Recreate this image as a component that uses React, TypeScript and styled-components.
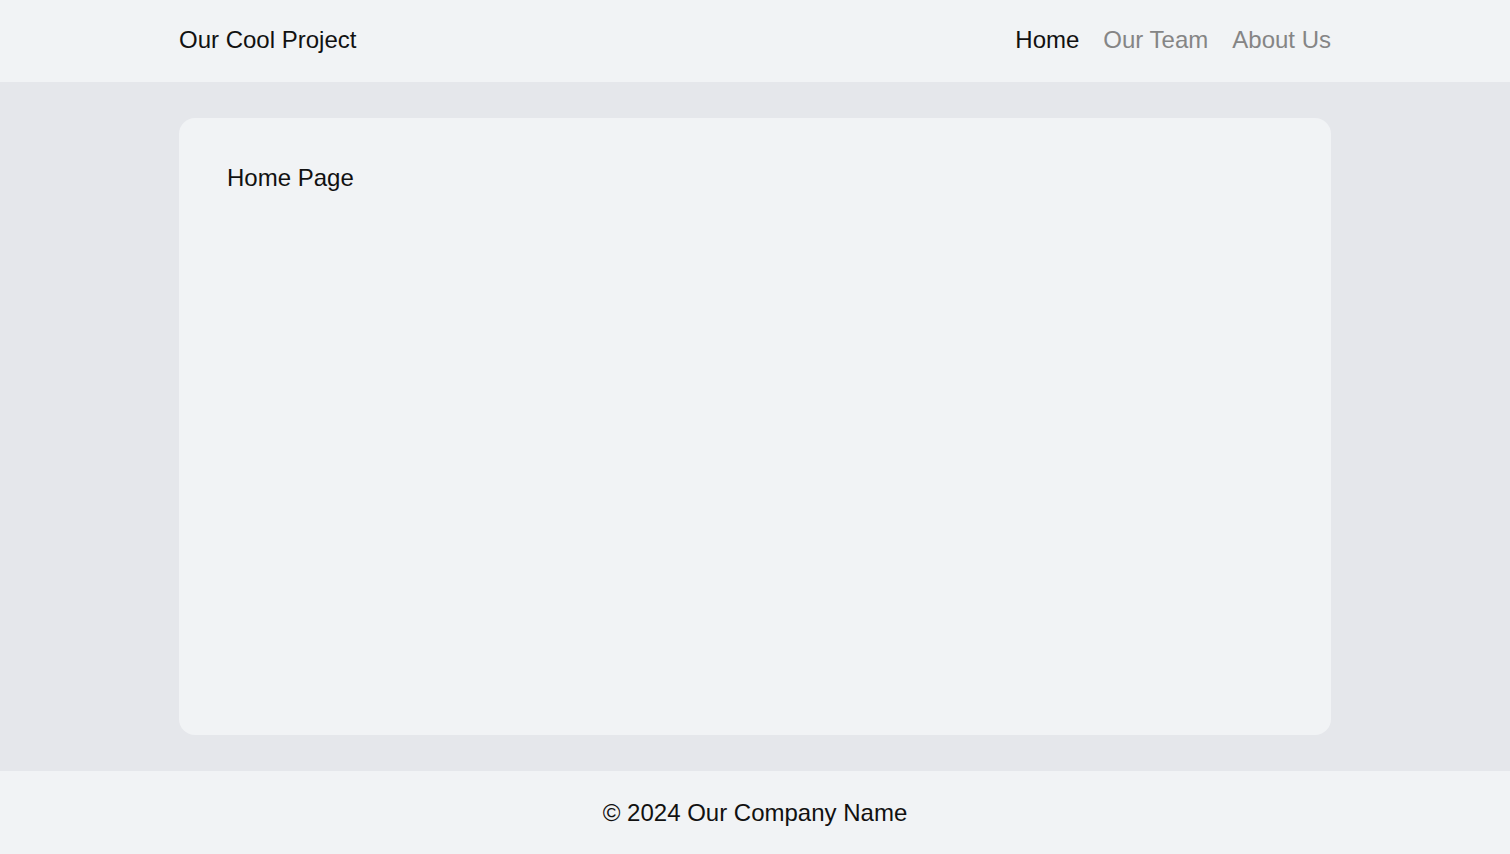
import React from "react";
import styled, { createGlobalStyle } from "styled-components";

const GlobalStyle = createGlobalStyle`
  html, body {
    margin: 0;
    padding: 0;
    height: 100%;
  }
  body {
    font-family: "Liberation Sans", Arial, sans-serif;
    color: #111111;
    background-color: #e5e7eb;
  }
  #root {
    min-height: 100vh;
    display: flex;
    flex-direction: column;
  }
`;

const App = () => {
  return (
    <>
      <GlobalStyle />
      <Header>
        <Inner>
          <Brand>Our Cool Project</Brand>
          <Nav>
            <NavLink href="#" $active>
              Home
            </NavLink>
            <NavLink href="#">Our Team</NavLink>
            <NavLink href="#">About Us</NavLink>
          </Nav>
        </Inner>
      </Header>
      <Main>
        <Card>
          <PageTitle>Home Page</PageTitle>
        </Card>
      </Main>
      <Footer>© 2024 Our Company Name</Footer>
    </>
  );
};

export default App;

const Header = styled.header`
  height: 82px;
  box-sizing: border-box;
  padding-bottom: 2px;
  background-color: #f1f3f5;
  display: flex;
  align-items: center;
`;

const Inner = styled.div`
  width: 1152px;
  margin: 0 auto;
  display: flex;
  align-items: center;
  justify-content: space-between;
`;

const Brand = styled.div`
  font-size: 24px;
  color: #111111;
`;

const Nav = styled.nav`
  display: flex;
  gap: 24px;
`;

const NavLink = styled.a<{ $active?: boolean }>`
  font-size: 24px;
  text-decoration: none;
  color: ${(p) => (p.$active ? "#111111" : "#858585")};
`;

const Main = styled.main`
  flex: 1;
  display: flex;
  padding: 36px 0;
`;

const Card = styled.section`
  flex: 1;
  width: 1152px;
  max-width: 1152px;
  margin: 0 auto;
  box-sizing: border-box;
  padding: 46px 48px;
  border-radius: 16px;
  background-color: #f1f3f5;
`;

const PageTitle = styled.h2`
  margin: 0;
  font-size: 24px;
  font-weight: 400;
`;

const Footer = styled.footer`
  height: 83px;
  background-color: #f1f3f5;
  display: flex;
  align-items: center;
  justify-content: center;
  font-size: 24px;
`;
